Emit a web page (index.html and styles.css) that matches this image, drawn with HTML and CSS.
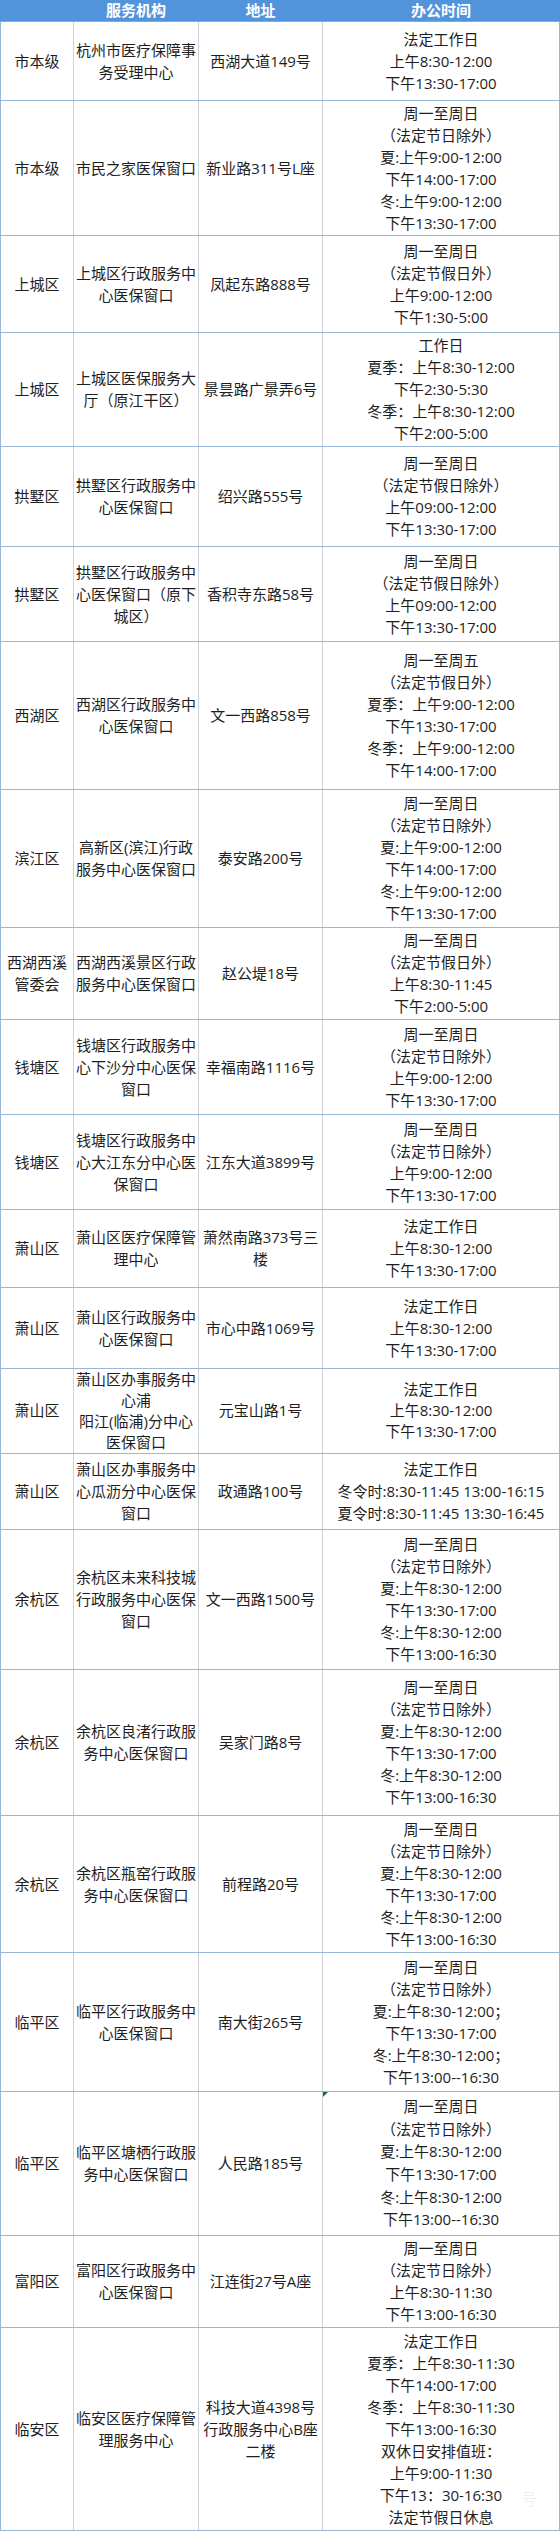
FILE: index.html
```html
<!DOCTYPE html>
<html lang="zh-CN">
<head>
<meta charset="utf-8">
<title>杭州市医保服务窗口办公时间</title>
<link rel="stylesheet" href="styles.css">
</head>
<body>
<table class="sheet">
  <colgroup>
    <col class="c-area"><col class="c-org"><col class="c-addr"><col class="c-time">
  </colgroup>
  <thead>
    <tr class="head">
      <th></th><th>服务机构</th><th>地址</th><th>办公时间</th>
    </tr>
  </thead>
  <tbody>
    <tr class="h79">
      <td>市本级</td>
      <td>杭州市医疗保障事<br>务受理中心</td>
      <td>西湖大道149号</td>
      <td>法定工作日<br>上午8:30-12:00<br>下午13:30-17:00</td>
    </tr>
    <tr class="h135">
      <td>市本级</td>
      <td>市民之家医保窗口</td>
      <td>新业路311号L座</td>
      <td>周一至周日<br>（法定节日除外）<br>夏:上午9:00-12:00<br>下午14:00-17:00<br>冬:上午9:00-12:00<br>下午13:30-17:00</td>
    </tr>
    <tr class="h97">
      <td>上城区</td>
      <td>上城区行政服务中<br>心医保窗口</td>
      <td>凤起东路888号</td>
      <td>周一至周日<br>（法定节假日外）<br>上午9:00-12:00<br>下午1:30-5:00</td>
    </tr>
    <tr class="h114">
      <td>上城区</td>
      <td>上城区医保服务大<br>厅（原江干区）</td>
      <td>景昙路广景弄6号</td>
      <td>工作日<br>夏季：上午8:30-12:00<br>下午2:30-5:30<br>冬季：上午8:30-12:00<br>下午2:00-5:00</td>
    </tr>
    <tr class="h100">
      <td>拱墅区</td>
      <td>拱墅区行政服务中<br>心医保窗口</td>
      <td>绍兴路555号</td>
      <td>周一至周日<br>（法定节假日除外）<br>上午09:00-12:00<br>下午13:30-17:00</td>
    </tr>
    <tr class="h95">
      <td>拱墅区</td>
      <td>拱墅区行政服务中<br>心医保窗口（原下<br>城区）</td>
      <td>香积寺东路58号</td>
      <td>周一至周日<br>（法定节假日除外）<br>上午09:00-12:00<br>下午13:30-17:00</td>
    </tr>
    <tr class="h148">
      <td>西湖区</td>
      <td>西湖区行政服务中<br>心医保窗口</td>
      <td>文一西路858号</td>
      <td>周一至周五<br>（法定节假日外）<br>夏季：上午9:00-12:00<br>下午13:30-17:00<br>冬季：上午9:00-12:00<br>下午14:00-17:00</td>
    </tr>
    <tr class="h138">
      <td>滨江区</td>
      <td>高新区(滨江)行政<br>服务中心医保窗口</td>
      <td>泰安路200号</td>
      <td>周一至周日<br>（法定节日除外）<br>夏:上午9:00-12:00<br>下午14:00-17:00<br>冬:上午9:00-12:00<br>下午13:30-17:00</td>
    </tr>
    <tr class="h92">
      <td>西湖西溪<br>管委会</td>
      <td>西湖西溪景区行政<br>服务中心医保窗口</td>
      <td>赵公堤18号</td>
      <td>周一至周日<br>（法定节假日外）<br>上午8:30-11:45<br>下午2:00-5:00</td>
    </tr>
    <tr class="h95">
      <td>钱塘区</td>
      <td>钱塘区行政服务中<br>心下沙分中心医保<br>窗口</td>
      <td>幸福南路1116号</td>
      <td>周一至周日<br>（法定节日除外）<br>上午9:00-12:00<br>下午13:30-17:00</td>
    </tr>
    <tr class="h95">
      <td>钱塘区</td>
      <td>钱塘区行政服务中<br>心大江东分中心医<br>保窗口</td>
      <td>江东大道3899号</td>
      <td>周一至周日<br>（法定节日除外）<br>上午9:00-12:00<br>下午13:30-17:00</td>
    </tr>
    <tr class="h78">
      <td>萧山区</td>
      <td>萧山区医疗保障管<br>理中心</td>
      <td>萧然南路373号三<br>楼</td>
      <td>法定工作日<br>上午8:30-12:00<br>下午13:30-17:00</td>
    </tr>
    <tr class="h81">
      <td>萧山区</td>
      <td>萧山区行政服务中<br>心医保窗口</td>
      <td>市心中路1069号</td>
      <td>法定工作日<br>上午8:30-12:00<br>下午13:30-17:00</td>
    </tr>
    <tr class="h84 tight">
      <td>萧山区</td>
      <td>萧山区办事服务中<br>心浦<br>阳江(临浦)分中心<br>医保窗口</td>
      <td>元宝山路1号</td>
      <td>法定工作日<br>上午8:30-12:00<br>下午13:30-17:00</td>
    </tr>
    <tr class="h76">
      <td>萧山区</td>
      <td>萧山区办事服务中<br>心瓜沥分中心医保<br>窗口</td>
      <td>政通路100号</td>
      <td>法定工作日<br>冬令时:8:30-11:45 13:00-16:15<br>夏令时:8:30-11:45 13:30-16:45</td>
    </tr>
    <tr class="h140">
      <td>余杭区</td>
      <td>余杭区未来科技城<br>行政服务中心医保<br>窗口</td>
      <td>文一西路1500号</td>
      <td>周一至周日<br>（法定节日除外）<br>夏:上午8:30-12:00<br>下午13:30-17:00<br>冬:上午8:30-12:00<br>下午13:00-16:30</td>
    </tr>
    <tr class="h146">
      <td>余杭区</td>
      <td>余杭区良渚行政服<br>务中心医保窗口</td>
      <td>吴家门路8号</td>
      <td>周一至周日<br>（法定节日除外）<br>夏:上午8:30-12:00<br>下午13:30-17:00<br>冬:上午8:30-12:00<br>下午13:00-16:30</td>
    </tr>
    <tr class="h137">
      <td>余杭区</td>
      <td>余杭区瓶窑行政服<br>务中心医保窗口</td>
      <td>前程路20号</td>
      <td>周一至周日<br>（法定节日除外）<br>夏:上午8:30-12:00<br>下午13:30-17:00<br>冬:上午8:30-12:00<br>下午13:00-16:30</td>
    </tr>
    <tr class="h139">
      <td>临平区</td>
      <td>临平区行政服务中<br>心医保窗口</td>
      <td>南大街265号</td>
      <td>周一至周日<br>（法定节日除外）<br>夏:上午8:30-12:00；<br>下午13:30-17:00<br>冬:上午8:30-12:00；<br>下午13:00--16:30</td>
    </tr>
    <tr class="h144 loose">
      <td>临平区</td>
      <td>临平区塘栖行政服<br>务中心医保窗口</td>
      <td>人民路185号</td>
      <td class="marked">周一至周日<br>（法定节日除外）<br>夏:上午8:30-12:00<br>下午13:30-17:00<br>冬:上午8:30-12:00<br>下午13:00--16:30</td>
    </tr>
    <tr class="h92">
      <td>富阳区</td>
      <td>富阳区行政服务中<br>心医保窗口</td>
      <td>江连街27号A座</td>
      <td>周一至周日<br>（法定节日除外）<br>上午8:30-11:30<br>下午13:00-16:30</td>
    </tr>
    <tr class="h203">
      <td>临安区</td>
      <td>临安区医疗保障管<br>理服务中心</td>
      <td>科技大道4398号<br>行政服务中心B座<br>二楼</td>
      <td class="stamped">法定工作日<br>夏季：上午8:30-11:30<br>下午14:00-17:00<br>冬季：上午8:30-11:30<br>下午13:00-16:30<br>双休日安排值班：<br>上午9:00-11:30<br>下午13：30-16:30<br>法定节假日休息<span class="watermark">号</span></td>
    </tr>
  </tbody>
</table>
</body>
</html>
```

FILE: styles.css
```css
html, body {
  margin: 0;
  padding: 0;
  background: #ffffff;
}

body {
  font-family: "Open Sans", "Noto Sans CJK SC", sans-serif;
  font-size: 15px;
  color: #1e1e1e;
}

.sheet {
  width: 559px;
  table-layout: fixed;
  border-collapse: collapse;
  border-spacing: 0;
}

.c-area { width: 73px; }
.c-org { width: 125px; }
.c-addr { width: 124px; }
.c-time { width: 237px; }

.sheet th,
.sheet td {
  padding: 0 1px;
  text-align: center;
  vertical-align: middle;
  white-space: nowrap;
  line-height: 22px;
}

.head {
  height: 21px;
}

.head th {
  background: #5294dc;
  color: #ffffff;
  font-weight: 700;
  line-height: 20px;
  border-left: 1px solid #5294dc;
  border-right: 1px solid #5294dc;
  border-bottom: 1px solid #8fa9c2;
}

.sheet td {
  border-left: 1px solid #cdd2d8;
  border-right: 1px solid #cdd2d8;
  border-bottom: 1px solid #98b8d6;
}

.sheet td:first-child {
  border-left: 1px solid #98b8d6;
}

.sheet td:last-child {
  border-right: 1px solid #98b8d6;
}

.tight td { line-height: 21px; }
.loose td.marked { line-height: 22.6px; }

.h76 { height: 76px; }
.h78 { height: 78px; }
.h79 { height: 79px; }
.h81 { height: 81px; }
.h84 { height: 84px; }
.h92 { height: 92px; }
.h95 { height: 95px; }
.h97 { height: 97px; }
.h100 { height: 100px; }
.h114 { height: 114px; }
.h135 { height: 135px; }
.h137 { height: 137px; }
.h138 { height: 138px; }
.h139 { height: 139px; }
.h140 { height: 140px; }
.h144 { height: 144px; }
.h146 { height: 146px; }
.h148 { height: 148px; }
.h203 { height: 203px; }

.marked,
.stamped {
  position: relative;
}

.marked::before {
  content: "";
  position: absolute;
  top: 0;
  left: 0;
  width: 0;
  height: 0;
  border-top: 5px solid #1f6b33;
  border-right: 5px solid transparent;
}

.watermark {
  position: absolute;
  right: 22px;
  bottom: 20px;
  font-size: 16px;
  color: rgba(0, 0, 0, 0.07);
}
```
